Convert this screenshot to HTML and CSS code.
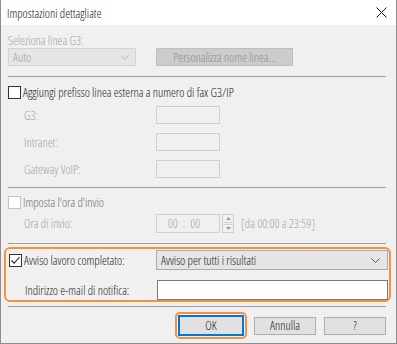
FILE: index.html
```html
<!DOCTYPE html>
<html lang="it">
<head>
  <meta charset="UTF-8" />
  <title>Impostazioni dettagliate</title>
  <link rel="stylesheet" href="styles.css">
</head>
<body>
  <div class="window">
    <div class="titlebar">
      <span class="title">Impostazioni dettagliate</span>
      <svg class="close" width="11" height="11" viewBox="0 0 11 11">
        <path d="M0.5 0.5 L10.5 10.5 M10.5 0.5 L0.5 10.5" stroke="#1a1a1a" stroke-width="1" fill="none"/>
      </svg>
    </div>

    <div class="content">
      <!-- Linea G3 -->
      <div class="caption disabled">Seleziona linea G3:</div>
      <div class="line-row">
        <div class="select select-disabled">
          <span>Auto</span>
          <svg class="chevron" width="9" height="5" viewBox="0 0 9 5"><path d="M0.5 0.5 L4.5 4.5 L8.5 0.5" stroke="#b8b8b8" fill="none"/></svg>
        </div>
        <div class="btn btn-disabled">Personalizza nome linea...</div>
      </div>

      <div class="sep sep-1"></div>

      <!-- Prefisso -->
      <div class="check-row check-prefix">
        <span class="checkbox"></span>
        <span>Aggiungi prefisso linea esterna a numero di fax G3/IP</span>
      </div>
      <div class="field-row row-g3">
        <span class="label disabled">G3:</span>
        <span class="input input-disabled"></span>
      </div>
      <div class="field-row row-next">
        <span class="label disabled">Intranet:</span>
        <span class="input input-disabled"></span>
      </div>
      <div class="field-row row-next">
        <span class="label disabled">Gateway VoIP:</span>
        <span class="input input-disabled"></span>
      </div>

      <div class="sep sep-2"></div>

      <!-- Ora d'invio -->
      <div class="check-row check-time">
        <span class="checkbox checkbox-disabled"></span>
        <span class="dim">Imposta l'ora d'invio</span>
      </div>
      <div class="field-row row-time">
        <span class="label disabled">Ora di invio:</span>
        <span class="input input-disabled time">
          <span>00</span><span>:</span><span>00</span>
        </span>
        <span class="spin">
          <span class="spin-btn"><svg width="5" height="3" viewBox="0 0 5 3"><path d="M0 3 L2.5 0 L5 3 Z" fill="#9a9a9a"/></svg></span>
          <span class="spin-btn"><svg width="5" height="3" viewBox="0 0 5 3"><path d="M0 0 L2.5 3 L5 0 Z" fill="#9a9a9a"/></svg></span>
        </span>
        <span class="range disabled">[da 00:00 a 23:59]</span>
      </div>

      <div class="sep sep-3"></div>

      <!-- Notifica -->
      <div class="highlight">
        <div class="field-row row-notify">
          <span class="label check-label">
            <span class="checkbox">
              <svg width="11" height="11" viewBox="0 0 11 11"><path d="M1.5 5.5 L4.2 8.3 L9.5 2" stroke="#1a1a1a" stroke-width="1.1" fill="none"/></svg>
            </span>
            <span>Avviso lavoro completato:</span>
          </span>
          <div class="select select-notify">
            <span>Avviso per tutti i risultati</span>
            <svg class="chevron" width="9" height="5" viewBox="0 0 9 5"><path d="M0.5 0.5 L4.5 4.5 L8.5 0.5" stroke="#555" fill="none"/></svg>
          </div>
        </div>
        <div class="field-row row-mail">
          <span class="label">Indirizzo e-mail di notifica:</span>
          <span class="input input-mail"></span>
        </div>
      </div>

      <div class="sep sep-4"></div>

      <div class="buttons">
        <span class="ok-ring"><span class="btn btn-ok">OK</span></span>
        <span class="btn">Annulla</span>
        <span class="btn">?</span>
      </div>
    </div>
  </div>
</body>
</html>
```

FILE: styles.css
```css
body {
  margin: 0;
  padding: 0;
  background: #ffffff;
  font-family: 'Open Sans', 'Liberation Sans', sans-serif;
  font-stretch: condensed;
  font-weight: 350;
  font-size: 12.25px;
  color: #1a1a1a;
  white-space: nowrap;
}

.window {
  width: 397px;
  height: 344px;
  box-sizing: border-box;
  border: 1px solid #8e8e8e;
  border-top: 0;
  background: #f0f0f0;
}

.titlebar {
  height: 25px;
  background: #ffffff;
  display: flex;
  align-items: center;
  justify-content: space-between;
  padding: 0 8px 0 6px;
}

.title {
  font-size: 12.25px;
  color: #111;
  margin-top: 1px;
}

.close {
  margin-right: 1px;
}

.content {
  padding: 0 10px 0 7px;
}

.disabled {
  color: #a3a3a3;
}

.dim {
  color: #6e6e6e;
}

.caption {
  margin-top: 8px;
  height: 15px;
  line-height: 15px;
}

.line-row {
  display: flex;
  height: 18px;
  gap: 20px;
}

.select {
  box-sizing: border-box;
  display: flex;
  align-items: center;
  justify-content: space-between;
  padding: 0 6px 0 4px;
}

.select-disabled {
  width: 128px;
  height: 18px;
  background: #e6e6e6;
  border: 1px solid #d4d4d4;
  color: #9c9c9c;
}

.btn {
  box-sizing: border-box;
  display: flex;
  align-items: center;
  justify-content: center;
  background: #e1e1e1;
  border: 1px solid #adadad;
  width: 62px;
  height: 18px;
}

.btn-disabled {
  width: 137px;
  height: 18px;
  background: #cccccc;
  border-color: #bfbfbf;
  color: #8d8d8d;
}

.sep {
  height: 1px;
  background: #a0a0a0;
}

.sep-1 { margin-top: 10px; }
.sep-2 { margin-top: 9px; }
.sep-3 { margin-top: 10px; }
.sep-4 { margin-top: 4px; }

.check-row {
  display: flex;
  align-items: center;
  gap: 2px;
  height: 16px;
}

.check-prefix { margin-top: 7px; }
.check-time { margin-top: 6px; }

.checkbox {
  box-sizing: border-box;
  width: 13px;
  height: 13px;
  border: 1px solid #333333;
  background: #ffffff;
  display: flex;
  align-items: center;
  justify-content: center;
  flex: none;
}

.checkbox-disabled {
  border-color: #c4c4c4;
}

.field-row {
  display: flex;
  align-items: center;
}

.label {
  width: 148px;
  padding-left: 16px;
  box-sizing: border-box;
  flex: none;
}

.input {
  box-sizing: border-box;
  display: block;
  height: 18px;
  border: 1px solid #cfcfcf;
}

.input-disabled {
  width: 64px;
  background: #f0f0f0;
}

.row-g3 { margin-top: 6px; height: 18px; }
.row-next { margin-top: 9px; height: 18px; }

.row-time {
  margin-top: 4px;
  height: 19px;
}

.time {
  height: 19px;
  display: flex;
  align-items: center;
  justify-content: center;
  gap: 5px;
  padding-right: 8px;
  color: #98a4b4;
}

.spin {
  display: flex;
  flex-direction: column;
  gap: 1px;
  margin-left: 2px;
}

.spin-btn {
  box-sizing: border-box;
  width: 12px;
  height: 9px;
  border: 1px solid #d0d0d0;
  background: #f0f0f0;
  display: flex;
  align-items: center;
  justify-content: center;
}

.range {
  margin-left: 7px;
}

.highlight {
  margin: 3px -5px 0 -4px;
  border: 2px solid #f6923f;
  border-radius: 6px;
  height: 55px;
  box-sizing: border-box;
  padding: 1px 1px 0 3px;
}

.check-label {
  display: flex;
  align-items: center;
  gap: 2px;
  padding-left: 0;
  width: 147px;
}

.select-notify {
  width: 233px;
  height: 20px;
  background: #e5e5e5;
  border: 1px solid #acacac;
  padding: 0 7px 0 4px;
}

.row-notify { height: 20px; }

.row-mail {
  margin-top: 10px;
  height: 20px;
}

.input-mail {
  width: 232px;
  height: 20px;
  background: #ffffff;
  border-color: #7a7a7a;
}

.buttons {
  display: flex;
  justify-content: flex-end;
  align-items: center;
  gap: 8px;
  margin-top: 5px;
}

.ok-ring {
  display: block;
  border: 2px solid #f6923f;
  border-radius: 5px;
  padding: 1px;
  margin-right: -1px;
}

.btn-ok {
  width: 66px;
  height: 21px;
  border: 2px solid #0078d7;
}
```
